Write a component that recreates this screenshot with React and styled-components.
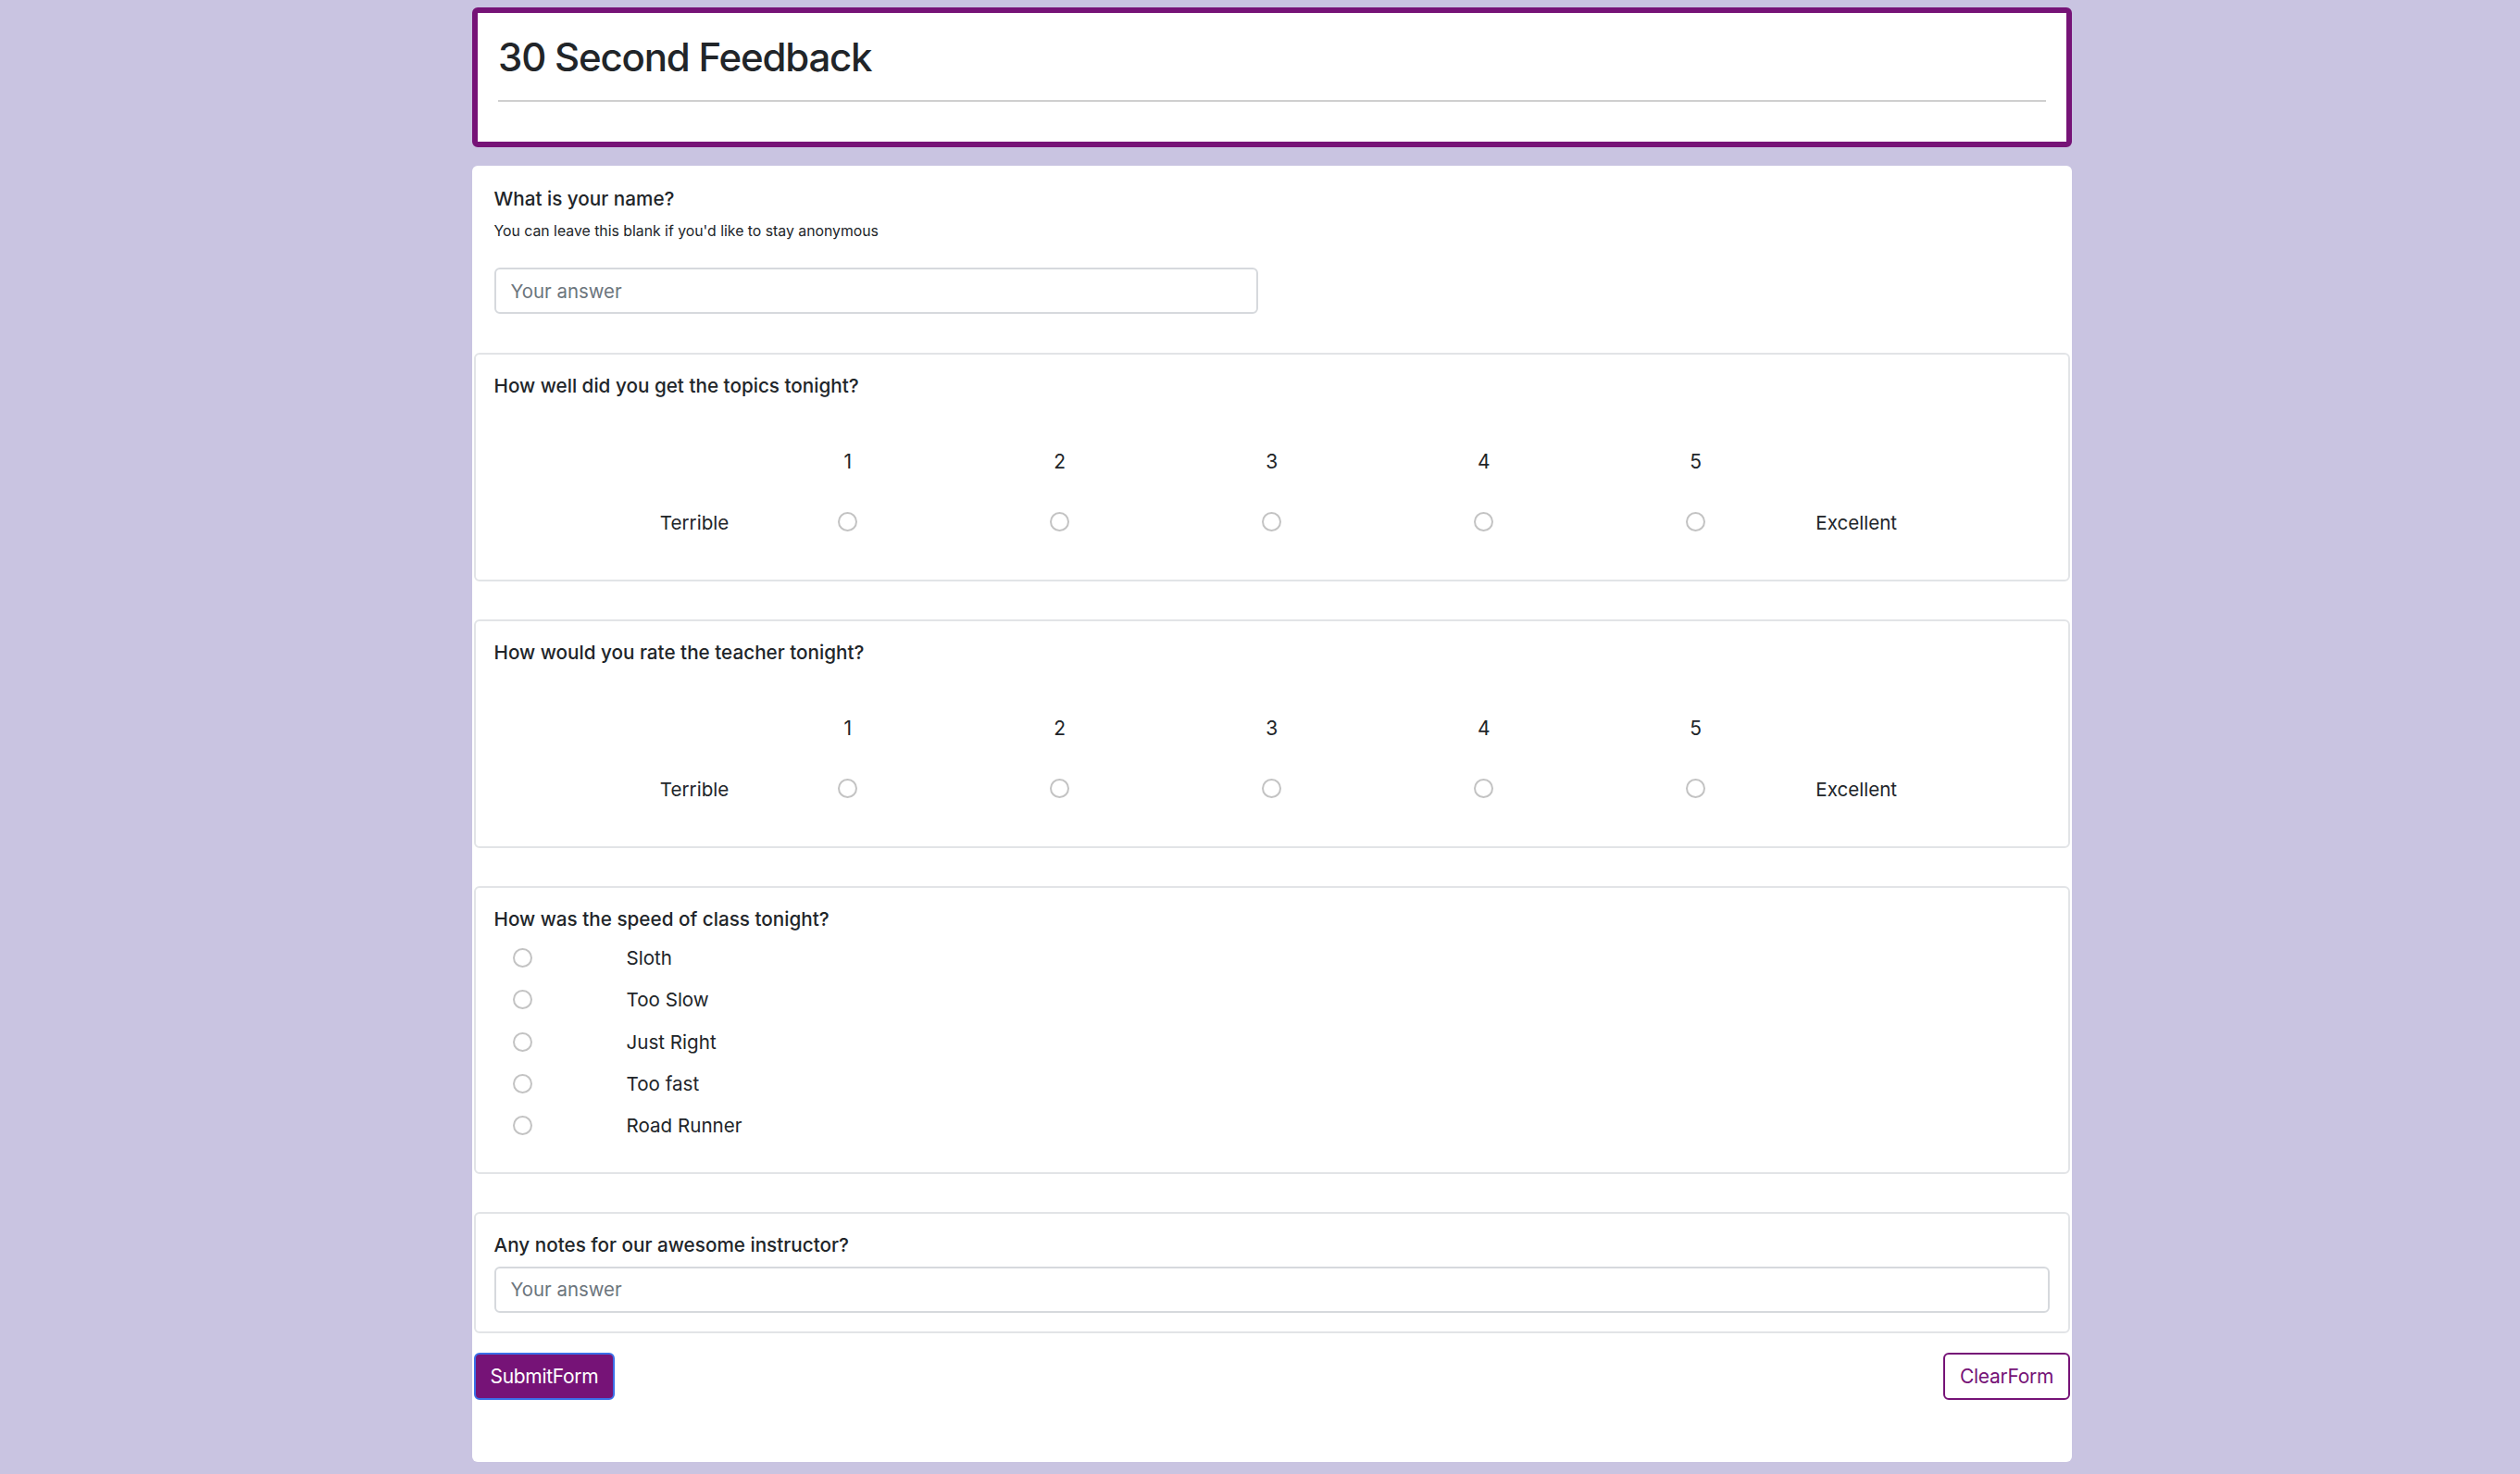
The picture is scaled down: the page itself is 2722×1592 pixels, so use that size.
import React from 'react'
import styled, { createGlobalStyle } from 'styled-components'

const purple = '#761377'

const GlobalStyle = createGlobalStyle`
    *, *::before, *::after {
        box-sizing: border-box;
    }
    html, body {
        margin: 0;
        padding: 0;
    }
    body {
        background: #c9c4e1;
        font-family: Inter, "Noto Sans", "Liberation Sans", sans-serif;
        color: #212529;
    }
`

const scaleQuestions = [
    'How well did you get the topics tonight?',
    'How would you rate the teacher tonight?',
]

const speeds = ['Sloth', 'Too Slow', 'Just Right', 'Too fast', 'Road Runner']

const App = () => {
    return (
        <>
            <GlobalStyle />
            <Page>
                <HeaderCard>
                    <Title>30 Second Feedback</Title>
                    <Rule />
                </HeaderCard>

                <FormCard>
                    <Section $plain>
                        <Question>What is your name?</Question>
                        <Hint>You can leave this blank if you'd like to stay anonymous</Hint>
                        <TextInput $width="825px" placeholder="Your answer" $top="28px" />
                    </Section>

                    {scaleQuestions.map((q, i) => (
                        <Section key={q} $gap={i === 0 ? '0' : '41px'}>
                            <Question>{q}</Question>
                            <ScaleGrid>
                                <span />
                                {[1, 2, 3, 4, 5].map((n) => (
                                    <ScaleNumber key={n}>{n}</ScaleNumber>
                                ))}
                                <span />
                                <EdgeLabel $side="left">Terrible</EdgeLabel>
                                {[1, 2, 3, 4, 5].map((n) => (
                                    <ScaleCell key={n}>
                                        <Radio type="radio" name={`scale-${i}`} value={n} />
                                    </ScaleCell>
                                ))}
                                <EdgeLabel $side="right">Excellent</EdgeLabel>
                            </ScaleGrid>
                        </Section>
                    ))}

                    <Section $gap="41px" $bottom="28px">
                        <Question>How was the speed of class tonight?</Question>
                        <OptionList>
                            {speeds.map((s) => (
                                <Option key={s}>
                                    <Radio type="radio" name="speed" value={s} />
                                    <OptionText>{s}</OptionText>
                                </Option>
                            ))}
                        </OptionList>
                    </Section>

                    <Section $gap="41px" $bottom="20px">
                        <Question>Any notes for our awesome instructor?</Question>
                        <TextInput placeholder="Your answer" $top="6.5px" />
                    </Section>

                    <ButtonRow>
                        <SubmitButton type="button">SubmitForm</SubmitButton>
                        <ClearButton type="button">ClearForm</ClearButton>
                    </ButtonRow>
                </FormCard>
            </Page>
        </>
    )
}

const Page = styled.div`
    display: flex;
    flex-direction: column;
    align-items: center;
    padding: 8px 0 14px 26px;
`

const HeaderCard = styled.header`
    width: 1728px;
    background: #fff;
    border: 6px solid ${purple};
    border-radius: 6px;
    padding: 22.5px 22px 43px;
`

const Title = styled.h1`
    margin: 0;
    font-size: 42px;
    line-height: 50px;
    font-weight: 500;
    letter-spacing: -1.2px;
    color: #212529;
`

const Rule = styled.div`
    margin-top: 21.5px;
    height: 2px;
    background: #cfcfcf;
`

const FormCard = styled.main`
    width: 1728px;
    margin-top: 20px;
    background: #fff;
    border-radius: 6px;
    padding: 0 2px 67px 1.5px;
`

const Section = styled.section`
    margin-top: ${(p) => p.$gap || '0'};
    border: 2px solid ${(p) => (p.$plain ? 'transparent' : '#e2e4e7')};
    border-radius: 6px;
    padding: 18px 20px ${(p) => p.$bottom || (p.$plain ? '40px' : '42px')};
`

const Question = styled.div`
    font-size: 20.7px;
    line-height: 32px;
    font-weight: 500;
`

const Hint = styled.div`
    margin-top: 8px;
    font-size: 15.8px;
    line-height: 22px;
`

const TextInput = styled.input`
    display: block;
    width: ${(p) => p.$width || '100%'};
    height: 50px;
    margin-top: ${(p) => p.$top};
    padding: 0 16px;
    border: 2px solid #d6d9dd;
    border-radius: 6px;
    font-family: inherit;
    font-size: 20.4px;
    color: #212529;
    outline: none;
    &::placeholder {
        color: #6c757d;
    }
`

const ScaleGrid = styled.div`
    display: grid;
    grid-template-columns: repeat(7, 229px);
    grid-template-rows: 40px 40px;
    row-gap: 26px;
    justify-content: center;
    align-items: center;
    margin-top: 45px;
`

const ScaleNumber = styled.div`
    text-align: center;
    font-size: 21px;
`

const ScaleCell = styled.div`
    display: flex;
    justify-content: center;
    transform: translateY(-1px);
`

const EdgeLabel = styled.div`
    font-size: 20.6px;
    text-align: ${(p) => (p.$side === 'left' ? 'right' : 'left')};
    padding: ${(p) => (p.$side === 'left' ? '0 14px 0 0' : '0 0 0 15px')};
`

const Radio = styled.input`
    appearance: none;
    margin: 0;
    width: 21px;
    height: 21px;
    border: 2px solid #c3c3c3;
    border-radius: 50%;
    background: #fff;
    flex-shrink: 0;
    &:checked {
        border-color: ${purple};
        background: radial-gradient(circle, ${purple} 40%, #fff 45%);
    }
`

const OptionList = styled.div`
    margin-top: 3px;
`

const Option = styled.label`
    display: flex;
    align-items: center;
    height: 45.3px;
    padding-left: 20px;
`

const OptionText = styled.span`
    margin-left: 102px;
    font-size: 20.6px;
`

const ButtonRow = styled.div`
    display: flex;
    justify-content: space-between;
    margin-top: 21px;
`

const BaseButton = styled.button`
    height: 51px;
    padding: 0 16px;
    border-radius: 6px;
    font-family: inherit;
    font-size: 21px;
    letter-spacing: -0.3px;
    cursor: pointer;
`

const SubmitButton = styled(BaseButton)`
    background: ${purple};
    color: #fff;
    border: 2px solid #3b6fe8;
`

const ClearButton = styled(BaseButton)`
    background: #fff;
    color: ${purple};
    border: 2px solid ${purple};
`

export default App
